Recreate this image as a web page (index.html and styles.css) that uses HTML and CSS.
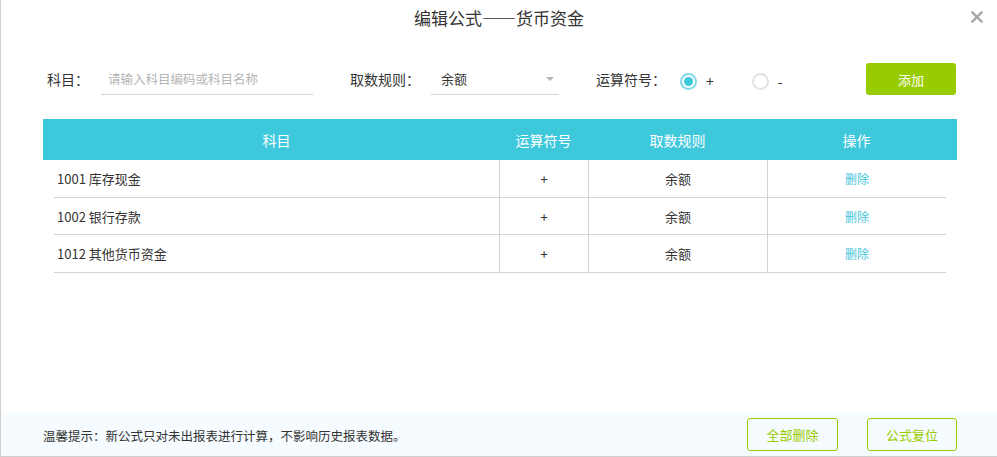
FILE: index.html
```html
<!DOCTYPE html>
<html lang="zh-CN">
<head>
<meta charset="utf-8">
<title>编辑公式</title>
<link rel="stylesheet" href="styles.css">
</head>
<body>
<div class="dialog">
  <div class="dialog-head">
    <h1 class="dialog-title">编辑公式——货币资金</h1>
    <span class="close" aria-label="关闭">
      <svg width="12" height="12" viewBox="0 0 12 12"><path d="M1.5 1.5 L10.5 10.5 M10.5 1.5 L1.5 10.5" stroke="#a6a6a6" stroke-width="2.4" stroke-linecap="square" fill="none"/></svg>
    </span>
  </div>

  <div class="dialog-body">
    <div class="form-row">
      <span class="label label-subject">科目：</span>
      <div class="input">请输入科目编码或科目名称</div>
      <span class="label label-rule">取数规则：</span>
      <div class="select"><span>余额</span><i class="caret"></i></div>
      <span class="label label-op">运算符号：</span>
      <label class="radio checked"><i class="dot"></i><span>+</span></label>
      <label class="radio"><i class="dot"></i><span>-</span></label>
      <button class="btn-add">添加</button>
    </div>

    <div class="grid-head">
      <div class="cols">
        <div>科目</div><div>运算符号</div><div>取数规则</div><div>操作</div>
      </div>
    </div>
    <div class="grid-body">
      <div class="cols row">
        <div class="c-subject">1001 库存现金</div><div>+</div><div>余额</div><div><a class="del">删除</a></div>
      </div>
      <div class="cols row">
        <div class="c-subject">1002 银行存款</div><div>+</div><div>余额</div><div><a class="del">删除</a></div>
      </div>
      <div class="cols row">
        <div class="c-subject">1012 其他货币资金</div><div>+</div><div>余额</div><div><a class="del">删除</a></div>
      </div>
    </div>
  </div>

  <div class="dialog-foot">
    <p class="tip">温馨提示：新公式只对未出报表进行计算，不影响历史报表数据。</p>
    <div class="foot-btns">
      <button class="btn-line">全部删除</button>
      <button class="btn-line">公式复位</button>
    </div>
  </div>
</div>
</body>
</html>
```

FILE: styles.css
```css
* { box-sizing: border-box; }
html, body { margin: 0; padding: 0; background: #fff; }
body {
  font-family: "Noto Sans CJK SC", "Noto Sans", sans-serif;
  color: #333;
}
.dialog {
  width: 997px;
  height: 457px;
  border-left: 1px solid #cfcfcf;
  border-bottom: 1px solid #cfcfcf;
  display: flex;
  flex-direction: column;
}
.dialog-head {
  position: relative;
  height: 35px;
  display: flex;
  align-items: center;
  justify-content: center;
}
.dialog-title {
  margin: 0;
  font-size: 17px;
  font-weight: normal;
  color: #333;
  line-height: 24px;
  padding-top: 1px;
}
.close {
  position: absolute;
  right: 14px;
  top: 11px;
  width: 12px;
  height: 12px;
  display: block;
}
.close svg { display: block; }

.dialog-body {
  flex: 1;
  padding: 28px 40px 0 42px;
}
.form-row {
  display: flex;
  align-items: center;
  height: 32px;
  font-size: 14px;
}
.label { color: #333; white-space: nowrap; }
.label-subject { width: 58px; padding-left: 4px; }
.input {
  width: 212px;
  height: 30px;
  border-bottom: 1px solid #d6d6d6;
  font-size: 12.5px;
  color: #b5b5b5;
  padding: 0 0 0 7px;
  line-height: 27px;
  margin-top: 1px;
}
.label-rule { margin-left: 37px; width: 81px; }
.select {
  position: relative;
  width: 128px;
  height: 30px;
  border-bottom: 1px solid #d6d6d6;
  font-size: 13px;
  padding-left: 10px;
  line-height: 27px;
  margin-top: 1px;
}
.caret {
  position: absolute;
  right: 5px;
  top: 12px;
  width: 0;
  height: 0;
  border-left: 4px solid transparent;
  border-right: 4px solid transparent;
  border-top: 4px solid #b3b3b3;
}
.label-op { margin-left: 37px; width: 84px; }
.radio {
  display: flex;
  align-items: center;
  margin-top: 4px;
  font-size: 14px;
}
.radio .dot {
  width: 17px;
  height: 17px;
  border-radius: 50%;
  border: 2px solid #e3e3e3;
  display: block;
  position: relative;
}
.radio.checked .dot { border-color: #80d9e8; }
.radio.checked .dot::after {
  content: "";
  position: absolute;
  left: 2px; top: 2px;
  width: 9px; height: 9px;
  border-radius: 50%;
  background: #3ec8dc;
}
.radio span { margin-left: 9px; color: #333; }
.radio + .radio { margin-left: 38px; }
.btn-add {
  margin-left: auto;
  width: 90px;
  height: 32px;
  border: none;
  border-radius: 3px;
  background: #99cc00;
  color: #fff;
  font-family: inherit;
  font-size: 13px;
  margin-right: 1px;
}

.grid-head {
  margin-top: 24px;
  background: #3ec8dc;
  height: 41px;
  padding: 0 11px;
  color: #fff;
  font-size: 14px;
}
.cols {
  display: grid;
  grid-template-columns: 445px 89px 179px 1fr;
  align-items: stretch;
}
.grid-head .cols { height: 41px; }
.grid-head .cols > div {
  display: flex;
  align-items: center;
  justify-content: center;
}
.grid-body { margin: 0 11px 0 11px; }
.row {
  height: 38px;
  border-bottom: 1px solid #d4d4d4;
  font-size: 13px;
}
.row:nth-child(2) { height: 37px; }
.row > div {
  display: flex;
  align-items: center;
  justify-content: center;
  border-left: 1px solid #d4d4d4;
}
.row > .c-subject {
  justify-content: flex-start;
  border-left: none;
  padding-left: 3px;
}
.del { color: #45c6dc; font-size: 12px; cursor: pointer; }

.dialog-foot {
  height: 43px;
  background: #f5fbfe;
  display: flex;
  align-items: center;
  justify-content: space-between;
  padding: 0 40px 0 42px;
}
.tip { margin: 0; font-size: 12.5px; color: #333; padding-top: 1px; }
.foot-btns { display: flex; gap: 29px; }
.btn-line {
  height: 33px;
  width: 90px;
  border: 1px solid #99cc00;
  border-radius: 3px;
  background: transparent;
  color: #99cc00;
  font-family: inherit;
  font-size: 13px;
}
.btn-line:first-child { width: 91px; }
```
